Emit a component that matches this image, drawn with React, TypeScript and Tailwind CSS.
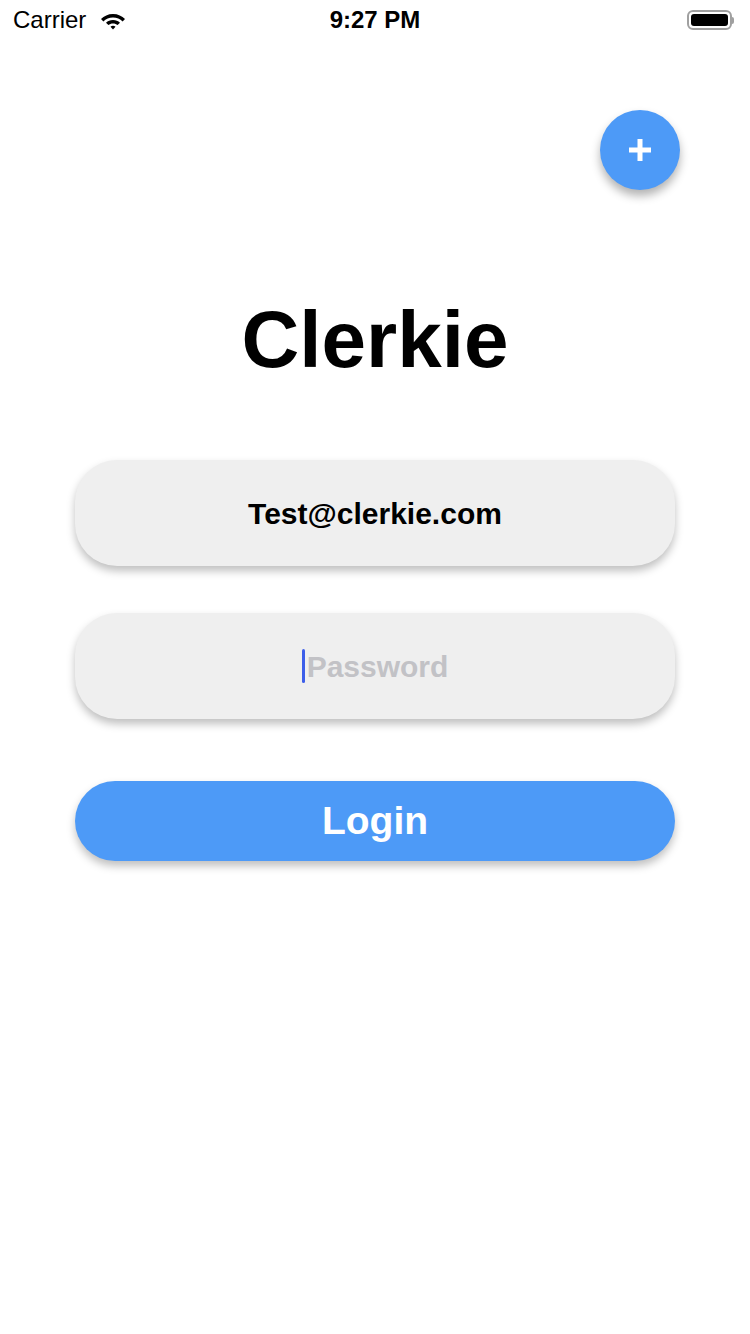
import React from "react";

export default function App() {
  return (
    <div
      className="w-[750px] h-[1334px] bg-white flex flex-col relative overflow-hidden"
      style={{ fontFamily: '"Liberation Sans", Arial, sans-serif' }}
    >
      {/* Status bar */}
      <div className="h-[40px] flex items-center justify-between px-[13px] text-black">
        <div className="flex items-center gap-[13px] w-[200px]">
          <span className="text-[24px] leading-none">Carrier</span>
          <svg width="28" height="20" viewBox="0 0 28 20">
            <path d="M14 4 C19 4 23 6 26 9 L23.6 11.4 C21.2 9 17.8 7.4 14 7.4 C10.2 7.4 6.8 9 4.4 11.4 L2 9 C5 6 9 4 14 4 Z" fill="#000" />
            <path d="M14 10 C16.8 10 19.2 11 21 12.7 L18.6 15.1 C17.4 14 15.8 13.4 14 13.4 C12.2 13.4 10.6 14 9.4 15.1 L7 12.7 C8.8 11 11.2 10 14 10 Z" fill="#000" />
            <path d="M14 15.8 C15 15.8 15.9 16.2 16.5 16.8 L14 19.4 L11.5 16.8 C12.1 16.2 13 15.8 14 15.8 Z" fill="#000" />
          </svg>
        </div>
        <span className="text-[24px] leading-none font-bold">9:27 PM</span>
        <div className="w-[200px] flex justify-end items-center pr-[3px]">
          <div className="w-[45px] h-[20px] rounded-[6px] border-[2px] border-[#a0a0a0] p-[2px]">
            <div className="w-full h-full bg-black rounded-[3px]" />
          </div>
          <div className="w-[2px] h-[7px] bg-[#a0a0a0] rounded-r-[2px]" />
        </div>
      </div>

      {/* FAB */}
      <div className="flex justify-end pr-[70px] mt-[70px]">
        <div className="w-[80px] h-[80px] rounded-full bg-[#4d9af7] flex items-center justify-center shadow-[0_6px_10px_rgba(0,0,0,0.3)]">
          <svg width="22" height="22" viewBox="0 0 22 22">
            <rect x="0" y="8.5" width="22" height="5" fill="#fff" />
            <rect x="8.5" y="0" width="5" height="22" fill="#fff" />
          </svg>
        </div>
      </div>

      {/* Title */}
      <div className="mt-[103px] flex justify-center">
        <h1 className="text-[80px] font-bold leading-[94px] text-black">Clerkie</h1>
      </div>

      {/* Form */}
      <div className="mt-[73px] flex flex-col items-center">
        <div className="w-[600px] h-[106px] rounded-[42px] bg-[#efefef] flex items-center justify-center shadow-[0_5px_8px_rgba(0,0,0,0.25)]">
          <span className="text-[30px] font-bold text-black">Test@clerkie.com</span>
        </div>
        <div className="mt-[47px] w-[600px] h-[106px] rounded-[42px] bg-[#efefef] flex items-center justify-center shadow-[0_5px_8px_rgba(0,0,0,0.25)]">
          <div className="flex items-center">
            <div className="w-[3px] h-[34px] bg-[#3d5ee9] rounded-full mr-[2px]" />
            <span className="text-[30px] font-bold text-[#c2c2c6]">Password</span>
          </div>
        </div>
        <div className="mt-[62px] w-[600px] h-[80px] rounded-full bg-[#4d9af7] flex items-center justify-center shadow-[0_5px_8px_rgba(0,0,0,0.25)]">
          <span className="text-[39px] font-bold text-white">Login</span>
        </div>
      </div>
    </div>
  );
}
